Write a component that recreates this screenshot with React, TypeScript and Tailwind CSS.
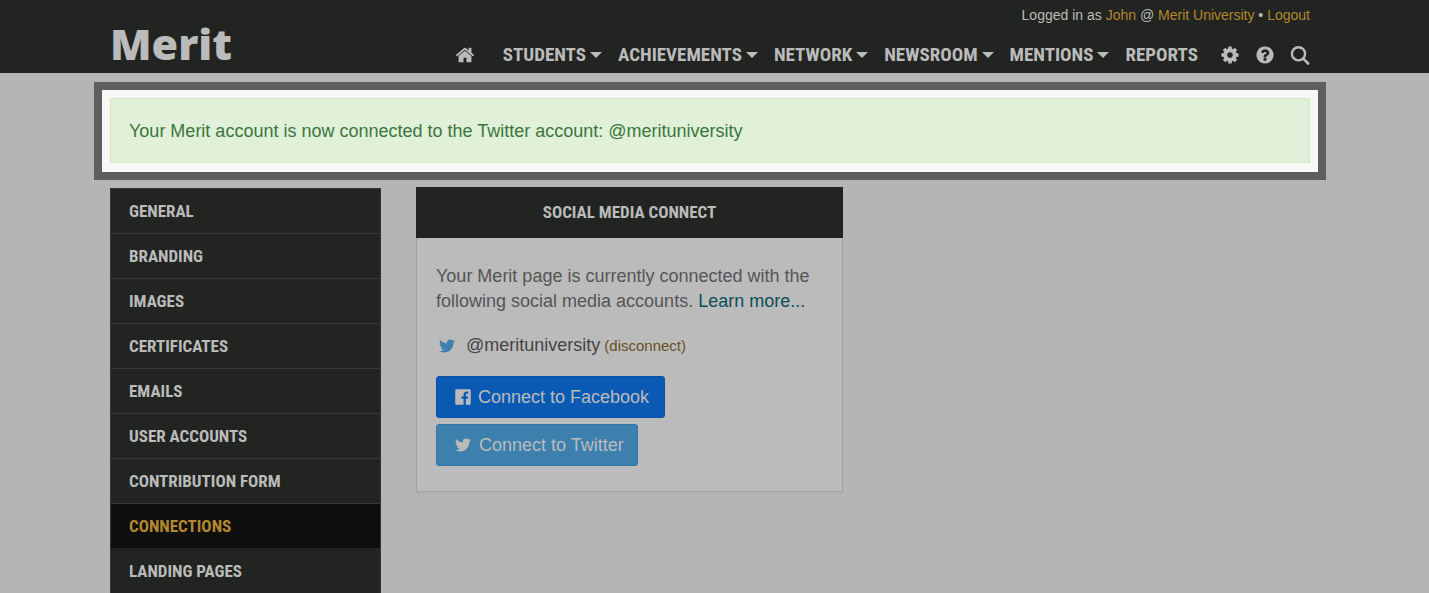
import type { ReactNode } from "react";
import { FaTwitter } from "react-icons/fa";

const menus = ["Students", "Achievements", "Network", "Newsroom", "Mentions"];

const sections = [
  "General",
  "Branding",
  "Images",
  "Certificates",
  "Emails",
  "User Accounts",
  "Contribution Form",
  "Connections",
  "Landing Pages",
];

const icons = {
  home: "M1472 992v480q0 26-19 45t-45 19h-384v-384h-256v384h-384q-26 0-45-19t-19-45v-480q0-1 .5-3t.5-3l575-474 575 474q1 2 1 6zm223-69l-62 74q-8 9-21 11h-3q-13 0-21-7l-692-577-692 577q-12 8-24 7-13-2-21-11l-62-74q-8-10-7-23.5t11-21.5l719-599q32-26 76-26t76 26l244 204v-195q0-14 9-23t23-9h192q14 0 23 9t9 23v408l219 182q10 8 11 21.5t-7 23.5z",
  cog: "M1152 896q0-106-75-181t-181-75-181 75-75 181 75 181 181 75 181-75 75-181zm512-109v222q0 12-8 23t-20 13l-185 28q-19 54-39 91 35 50 107 138 10 12 10 25t-9 23q-27 37-99 108t-94 71q-12 0-26-9l-138-108q-44 23-91 38-16 136-29 186-7 28-36 28h-222q-14 0-24.5-8.5t-11.5-21.5l-28-184q-49-16-90-37l-141 107q-10 9-25 9-14 0-25-11-126-114-165-168-7-10-7-23 0-12 8-23 15-21 51-66.5t54-70.5q-27-50-41-99l-183-27q-13-2-21-12.5t-8-23.5v-222q0-12 8-23t19-13l186-28q14-46 39-92-40-57-107-138-10-12-10-24 0-10 9-23 26-36 98.5-107.5t94.5-71.5q13 0 26 10l138 107q44-23 91-38 16-136 29-186 7-28 36-28h222q14 0 24.5 8.5t11.5 21.5l28 184q49 16 90 37l142-107q9-9 24-9 13 0 25 10 129 119 165 170 7 8 7 22 0 12-8 23-15 21-51 66.5t-54 70.5q26 50 41 98l183 28q13 2 21 12.5t8 23.5z",
  help: "M1024 1376v-192q0-14-9-23t-23-9h-192q-14 0-23 9t-9 23v192q0 14 9 23t23 9h192q14 0 23-9t9-23zm256-672q0-88-55.5-163t-138.5-116-170-41q-243 0-371 213-15 24 8 42l132 100q7 6 19 6 16 0 25-12 53-68 86-92 34-24 86-24 48 0 85.5 26t37.5 59q0 38-20 61t-68 45q-63 28-115.5 86.5t-52.5 125.5v36q0 14 9 23t23 9h192q14 0 23-9t9-23q0-19 21.5-49.5t54.5-49.5q32-18 49-28.5t46-35 44.5-48 28-60.5 12.5-81zm384 192q0 209-103 385.5t-279.5 279.5-385.5 103-385.5-103-279.5-279.5-103-385.5 103-385.5 279.5-279.5 385.5-103 385.5 103 279.5 279.5 103 385.5z",
  facebook: "M1579 128q35 0 60 25t25 60v1366q0 35-25 60t-60 25h-391v-595h199l30-232h-229v-148q0-56 23.5-84t91.5-28l122-1v-207q-63-9-178-9-136 0-217.5 80t-81.5 226v171h-200v232h200v595h-735q-35 0-60-25t-25-60v-1366q0-35 25-60t60-25h1366z",
};

function Icon({ name, className }: { name: keyof typeof icons; className: string }) {
  return (
    <svg viewBox="0 0 1792 1792" fill="currentColor" className={className} aria-hidden="true">
      <path d={icons[name]} />
    </svg>
  );
}

function Container({ children, className = "" }: { children: ReactNode; className?: string }) {
  return (
    <div className="pr-[9px]">
      <div className={`mx-auto max-w-[1200px] ${className}`}>{children}</div>
    </div>
  );
}

function Header() {
  return (
    <header className="bg-[#222421] text-[#bbb]">
      <Container className="flex h-[73px] justify-between">
        <a href="#" className="pt-[19px] font-['Open_Sans'] text-[43px] leading-[50px] font-extrabold">
          Merit
        </a>
        <div className="flex flex-col items-end">
          <p className="pt-[5px] text-[14px] leading-5">
            Logged in as{" "}
            <a href="#" className="text-[#b4882d]">John</a> @{" "}
            <a href="#" className="text-[#b4882d]">Merit University</a> •{" "}
            <a href="#" className="text-[#b4882d]">Logout</a>
          </p>
          <nav className="flex items-center pt-[15px] font-['Roboto_Condensed','Open_Sans_Condensed',sans-serif] text-[19px] leading-[30px] font-bold uppercase">
            <a href="#" aria-label="Home" className="mr-7">
              <Icon name="home" className="size-5" />
            </a>
            {menus.map((menu) => (
              <button key={menu} className="mr-4 flex items-center gap-1 uppercase">
                {menu}
                <span className="border-x-6 border-t-6 border-x-transparent border-t-current" />
              </button>
            ))}
            <a href="#" className="mr-[22px]">Reports</a>
            <a href="#" aria-label="Settings" className="mr-[15px]">
              <Icon name="cog" className="size-5" />
            </a>
            <a href="#" aria-label="Help" className="mr-[15px]">
              <Icon name="help" className="size-5" />
            </a>
            <button aria-label="Search">
              <svg viewBox="0 0 20 20" className="size-5" fill="none" stroke="currentColor">
                <circle cx="8.5" cy="8.8" r="6.6" strokeWidth="2.4" />
                <path d="M13.5 13.8 18.2 18.5" strokeWidth="2.6" strokeLinecap="round" />
              </svg>
            </button>
          </nav>
        </div>
      </Container>
    </header>
  );
}

export default function App() {
  return (
    <div className="h-screen overflow-hidden bg-[#b5b5b5] font-['Liberation_Sans',sans-serif] text-[18px]">
      <Header />

      <Container className="pt-[9px]">
        {/* Highlighted notice */}
        <div className="-mx-4 border-8 border-[#5e5e5e] bg-[#f8f8f8] px-2 pt-2 pb-[9px]">
          <div role="status" className="border border-[#d0e9c0] bg-[#e0f0d9] px-[18px] pt-5 pb-[18px] leading-[25px] text-[#3c763d]">
            Your Merit account is now connected to the Twitter account: @merituniversity
          </div>
        </div>

        <div className="flex items-start gap-[35px] pt-[7px]">
          <nav className="mt-px w-[271px] shrink-0 border border-[#323633] bg-[#222421] font-['Roboto_Condensed','Open_Sans_Condensed',sans-serif] text-[17px] font-bold uppercase">
            {sections.map((section) => (
              <a
                key={section}
                href="#"
                className={`block border-b px-[18px] py-[9px] leading-[26px] ${
                  section === "Connections"
                    ? "border-[#222421] bg-[#0f0f0f] text-[#b4882d]"
                    : "border-[#373a37] text-[#bbb]"
                }`}
              >
                {section}
              </a>
            ))}
          </nav>

          <section className="w-[427px] bg-[#bbb] shadow-xs">
            <h2 className="bg-[#222421] py-[13px] text-center font-['Roboto_Condensed','Open_Sans_Condensed',sans-serif] text-[17px] leading-[25px] font-bold text-[#bbb] uppercase">
              Social Media Connect
            </h2>
            <div className="border border-t-0 border-[#a3a3a3] px-[19px] pt-[26px] pb-[25px]">
              <p className="leading-[25px] text-[#555]">
                Your Merit page is currently connected with the following social media accounts.{" "}
                <a href="#" className="text-[#0b4f58]">Learn more...</a>
              </p>
              <div className="mt-[19px] flex items-center leading-[25px] text-[#444]">
                <FaTwitter className="mr-[11px] ml-[3px] size-4 text-[#3d80ae]" />
                @merituniversity
                <button className="ml-1 text-[15px] text-[#6a4e26]">(disconnect)</button>
              </div>
              <div className="mt-[18px] flex flex-col items-start gap-1.5 text-[#bbb]">
                <button className="flex h-[42px] items-center rounded-[3px] border border-[#0a50a4] bg-[#0a5ab4] pr-[15px] pl-[17px]">
                  <Icon name="facebook" className="mr-[6px] size-[18px]" />
                  Connect to Facebook
                </button>
                <button className="flex h-[42px] items-center rounded-[3px] border border-[#2f75a5] bg-[#3d80ae] pr-[13px] pl-[18px]">
                  <FaTwitter className="mr-2 size-4" />
                  Connect to Twitter
                </button>
              </div>
            </div>
          </section>
        </div>
      </Container>
    </div>
  );
}
